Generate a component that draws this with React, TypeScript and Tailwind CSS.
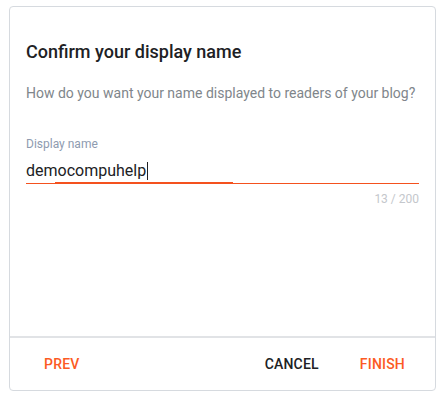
import React from 'react';

const App: React.FC = () => {
  return (
    <div className="w-[446px] h-[404px] bg-white pt-[6px] pl-[9px]" style={{ fontFamily: 'Roboto, Arial, sans-serif' }}>
      <div className="w-[427px] h-[385px] border border-[#d6dadf] rounded-[4px] flex flex-col">
        <div className="flex-1 px-4 pt-[33px]">
          <h2 className="text-[18px] leading-[24px] font-medium text-[#202124]">Confirm your display name</h2>
          <p className="mt-[19px] text-[14px] leading-[20px] text-[#80868b]">
            How do you want your name displayed to readers of your blog?
          </p>
          <div className="mt-[33px]">
            <div className="text-[12px] leading-[16px] text-[#8e9bb0]">Display name</div>
            <div className="relative mt-[7px]">
              <div className="flex items-center h-[25px] pb-[1px] text-[16px] text-[#202124] border-b-[1px] border-solid border-b-[#f4511e]">
                <span>democompuhelp</span>
                <span className="ml-[1px] w-[1px] h-[18px] bg-[#202124]"></span>
              </div>
              <div className="absolute left-[29px] w-[178px] bottom-0 h-[2px] bg-[#f4511e]"></div>
            </div>
            <div className="mt-[7px] text-right text-[12px] leading-[16px] text-[#c4c7cc]">13 / 200</div>
          </div>
        </div>
        <div className="h-[54px] border-t-[2px] border-[#e1e3e6] flex items-center pl-[34px] pr-[30px] text-[14px] font-medium tracking-[0.2px]">
          <button className="text-[#fc5a23]">PREV</button>
          <div className="flex-1"></div>
          <button className="text-[#202124]">CANCEL</button>
          <button className="ml-[41px] text-[#fc5a23]">FINISH</button>
        </div>
      </div>
    </div>
  );
};

export default App;
